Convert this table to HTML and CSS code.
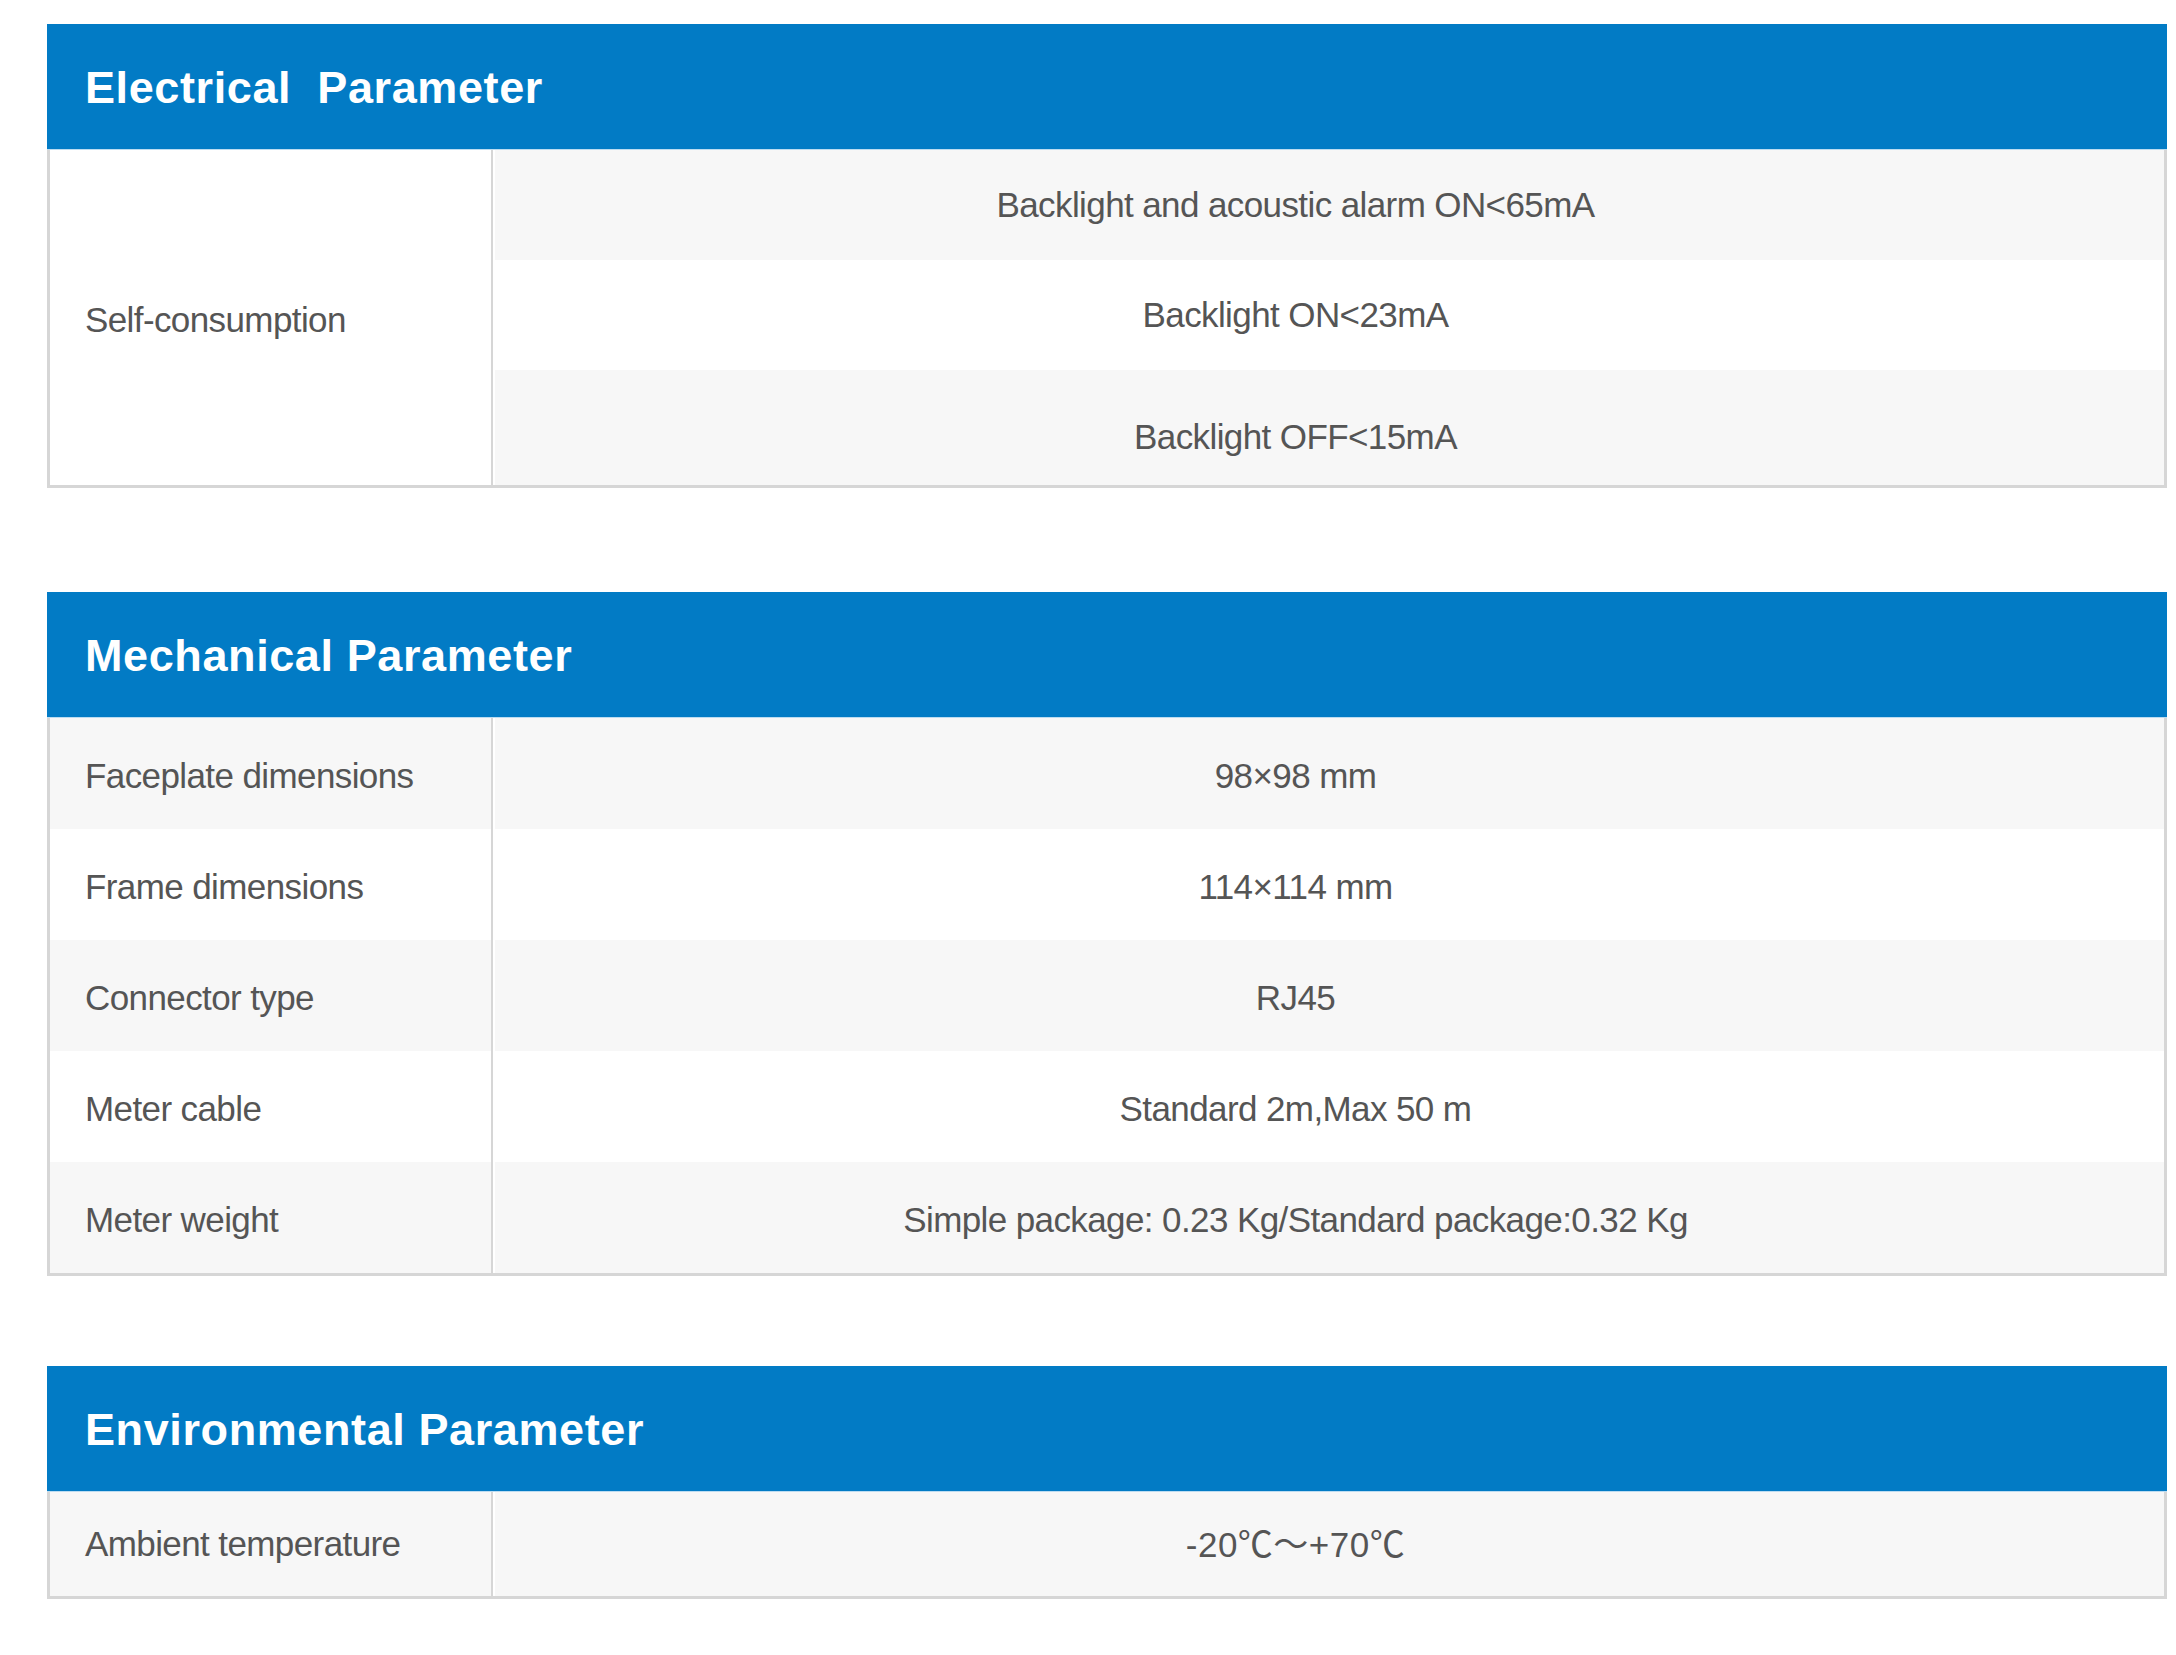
FILE: index.html
```html
<!DOCTYPE html>
<html lang="en">
<head>
<meta charset="utf-8">
<title>Parameters</title>
<link rel="stylesheet" href="styles.css">
</head>
<body>
<div class="page">
  <section class="spec spec-electrical">
    <div class="spec-head">Electrical&nbsp; Parameter</div>
    <div class="spec-body">
      <div class="row row-group">
        <div class="label">Self-consumption</div>
        <div class="values">
          <div class="value sub shade">Backlight and acoustic alarm ON&lt;65mA</div>
          <div class="value sub">Backlight ON&lt;23mA</div>
          <div class="value sub shade sub-last">Backlight OFF&lt;15mA</div>
        </div>
      </div>
    </div>
  </section>

  <section class="spec spec-mechanical">
    <div class="spec-head">Mechanical Parameter</div>
    <div class="spec-body">
      <div class="row shade"><div class="label">Faceplate dimensions</div><div class="value">98×98 mm</div></div>
      <div class="row"><div class="label">Frame dimensions</div><div class="value">114×114 mm</div></div>
      <div class="row shade"><div class="label">Connector type</div><div class="value">RJ45</div></div>
      <div class="row"><div class="label">Meter cable</div><div class="value">Standard 2m,Max 50 m</div></div>
      <div class="row shade"><div class="label">Meter weight</div><div class="value">Simple package: 0.23 Kg/Standard package:0.32 Kg</div></div>
    </div>
  </section>

  <section class="spec spec-environmental">
    <div class="spec-head">Environmental Parameter</div>
    <div class="spec-body">
      <div class="row shade row-env"><div class="label">Ambient temperature</div><div class="value temp">-20℃～+70℃</div></div>
    </div>
  </section>
</div>
</body>
</html>
```

FILE: styles.css
```css
html, body {
  margin: 0;
  padding: 0;
  background: #ffffff;
}

.page {
  padding: 24px 0 40px 47px;
  width: 2120px;
  display: flex;
  flex-direction: column;
}

.spec {
  width: 2120px;
  font-family: "Liberation Sans", Arial, "Noto Sans CJK SC", sans-serif;
}

.spec-mechanical {
  margin-top: 104px;
}

.spec-environmental {
  margin-top: 90px;
}

.spec-head {
  box-sizing: border-box;
  background: #027bc5;
  border-bottom: 1px solid #bcdcf1;
  height: 126px;
  display: flex;
  align-items: center;
  padding-left: 38px;
  padding-top: 2px;
  color: #ffffff;
  font-weight: bold;
  font-size: 45px;
  letter-spacing: 0.6px;
}

.spec-body {
  border: 3px solid #d6d6d6;
  border-top: none;
  display: flex;
  flex-direction: column;
}

.row {
  display: grid;
  grid-template-columns: 443px 1fr;
  height: 111px;
  background: #ffffff;
}

.row.shade {
  background: #f7f7f7;
}

.row-group {
  height: auto;
}

.row-env {
  height: 104px;
}

.label {
  display: flex;
  align-items: center;
  padding-left: 35px;
  padding-top: 4px;
  border-right: 2px solid #d6d6d6;
  color: #555555;
  font-size: 35px;
  letter-spacing: -0.6px;
}

.value {
  display: flex;
  align-items: center;
  justify-content: center;
  padding-right: 66px;
  padding-top: 4px;
  color: #555555;
  font-size: 35px;
  letter-spacing: -0.6px;
  box-shadow: inset 2px 0 0 #ffffff;
}

.values {
  display: flex;
  flex-direction: column;
}

.sub {
  height: 110px;
  padding-top: 0;
  background: #ffffff;
}

.sub.shade {
  background: #f7f7f7;
}

.sub-last {
  height: 115px;
  padding-top: 18px;
  box-sizing: border-box;
}

.row-env .label {
  padding-top: 0;
}

.temp {
  letter-spacing: 0.5px;
  padding-top: 0;
  padding-bottom: 6px;
}
```
